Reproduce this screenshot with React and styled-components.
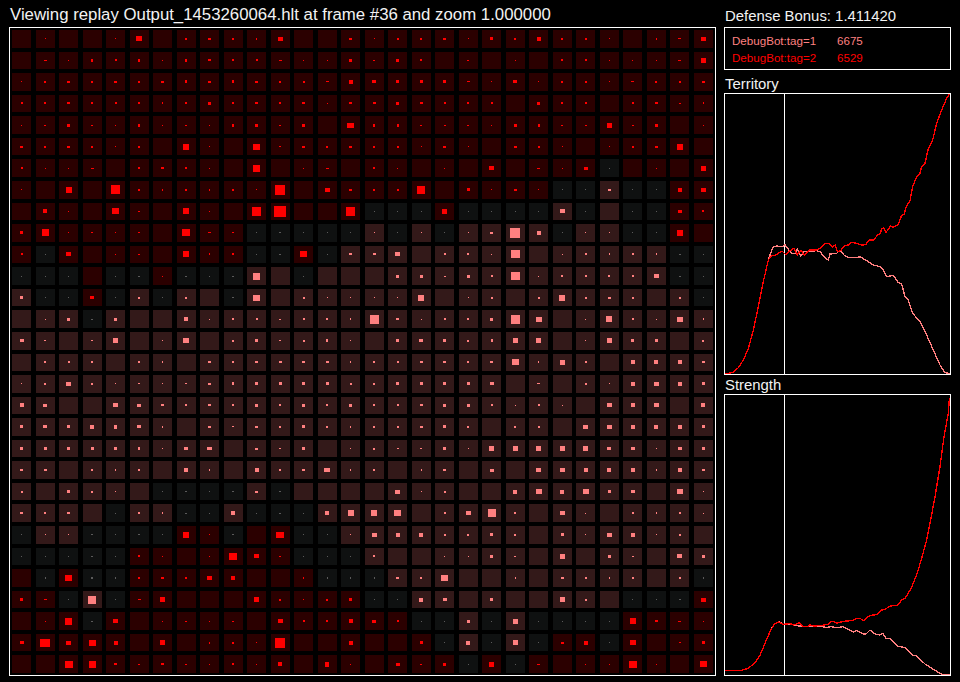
import React from 'react';
import styled, { createGlobalStyle } from 'styled-components';

const GlobalStyle = createGlobalStyle`
  html, body {
    margin: 0;
    background: #000;
  }
  body {
    font-family: "Liberation Sans", Arial, sans-serif;
    color: #fff;
  }
`;

// one row per map row, 3 blocks of 10 columns: r = red player, p = pink player, n = neutral
const OWNERS = [
  'rrrrrrrrrr' + 'rrrrrrrrrr' + 'rrrrrrrrrr',
  'rrrrrrrrrr' + 'rrrrrrrrrr' + 'rrrrrrrrrr',
  'rrrrrrrrrr' + 'rrrrrrrrrr' + 'rrrrrrrrrr',
  'rrrrrrrrrr' + 'rrrrrrrrrr' + 'rrrrrrrrrr',
  'rrrrrrrrrr' + 'rrrrrrrrrr' + 'rrrrrrrrrr',
  'rrrrrrrrrr' + 'rrrrrrrrrr' + 'rrrrrrrrrr',
  'rrrrrrrrrr' + 'rrrrrrrrrr' + 'rrrrrnrrrr',
  'rrrrrrrrrr' + 'rrrrrrrrrr' + 'rrrnnpnnrr',
  'rrrrrrrrrr' + 'rrrrrnnnrn' + 'nnnpnpnnrr',
  'rrrrrrrrrr' + 'nnnnnpnpnp' + 'pppnppnnrr',
  'rnrrrrrrrr' + 'nnrnpppppp' + 'ppppppppnn',
  'nnnrnnrnnn' + 'ppnppppppp' + 'ppppppppnn',
  'pnnrnpnppn' + 'pppppppppp' + 'pppppppppn',
  'pppnpppppp' + 'pppppppppp' + 'pppppppppp',
  'pppppppppp' + 'pppppppppp' + 'pppppppppp',
  'pppppppppp' + 'pppppppppp' + 'pppppppppp',
  'pppppppppp' + 'pppppppppp' + 'pppppppppp',
  'pppppppppp' + 'pppppppppp' + 'pppppppppp',
  'pppppppppp' + 'pppppppppp' + 'pppppppppp',
  'pppppppppp' + 'pppppppppp' + 'pppppppppp',
  'pppppppppp' + 'pppppppppp' + 'pppppppppp',
  'ppppppnnnn' + 'pnpppppppp' + 'pppppppppp',
  'ppppnppnnp' + 'nnnppppppp' + 'pppppppppp',
  'nppnnnnrrn' + 'rrnnpppppp' + 'pppppppppp',
  'nnnnnrrrrr' + 'rrnnnppppp' + 'pppppppppp',
  'rnrnnrrrrr' + 'rrrnnnpppp' + 'pppppppppn',
  'rrnpnrrrrr' + 'rrrrrnnppp' + 'ppppppnnnr',
  'rrrnrrrrrr' + 'rrrrrrrnnp' + 'npnnnnrrrr',
  'rrrrrrrrrr' + 'rrrrrrrrnp' + 'npnrrnrrrr',
  'rrrrrrrrrr' + 'rrrrrrrrrn' + 'rnrrrrrrrr',
];

// strength mark in each cell, see MARKS
const STRENGTH = [
  '01001M02=2' + 'JW00=122=1' + '3242210J_W',
  '0_1I2I1I=2' + '2_113-320-' + '01022111_5',
  '12=2=2=I=I' + '=22_4w333_' + '1w1221_22=',
  '22=222J232' + '=2=1==3=22' + '2032202=-J',
  '1-3-1I1-1I' + '3-30NII---' + '13I--5-301',
  '=2=2120610' + 'P-=2=221=1' + '0=21012=60',
  '211_02=210' + '701_021010' + 'W0_1w10105',
  '106092J2J2' + '1a0W=22803' + '1=111=114W',
  '0410P-0610' + '9c00911151' + '111W1011w2',
  '371-1-0Q_-' + '1-11111111' + '=a41111160',
  '21W01-06J2' + '1-P1==W022' + '1R012J2J-1',
  '11101-1-1-' + '70100033-3' + '2R12222W-1',
  '311w12120-' + 'P021111601' + '20262=2021',
  '013-300412' + '2-22J9=122' + '39M01621MJ',
  'w-0-501M02' + '3-2I103w32' + 'I550153302',
  '022202J0=2' + '====J22==2' + '=PJ520444=',
  '12W21-1-=I' + '3333223333' + 'w0_0214W43',
  '4w00Ww=2=2' + '3232322=33' + '21210W4W04',
  '3w34HwJ0=-' + '=232J22=32' + '0220WW4443',
  '33333I1wV0' + '=-3012--31' + '55555ww1w3',
  '==02J204J0' + '42=XJ20J=0' + 'w0WW444J4=',
  '2032101-1-' + '=-0000W120' + '04M4M3w0M1',
  '=2=012J-14' + '1-1466P02W' + '820W102J21',
  '111-1-161-' + '0U111W4422' + '32031W4120',
  '111-12101Q' + 'W-11120011' + '3-0503-0W3',
  '0JP2J2=2W4' + '00JJJJ=2P0' + '0J0=2J202J',
  '3_181_5000' + '52123114w0' + '30052011-W',
  '017-W01-1-' + '0W224w2113' + '1511116=_1',
  'wZWP4050J2' + '1a00400314' + '151=41M0-3',
  '00Q7=-=-12' + '140K10w-31' + '51_011Q10P',
];

// width and height in pixels for each mark
const MARKS = {
  1: [1, 1], 2: [2, 2], 3: [3, 3], 4: [4, 4], 5: [5, 5], 6: [6, 6], 7: [7, 7], 8: [8, 8], 9: [9, 9],
  a: [10, 10], c: [12, 11],
  '-': [2, 1], _: [3, 1], '=': [3, 2], J: [1, 2], I: [2, 3], H: [3, 4], K: [4, 5],
  w: [4, 3], W: [5, 4], V: [5, 3], M: [6, 5], X: [6, 4], U: [8, 6], N: [7, 5], P: [7, 6], Q: [8, 7], R: [9, 8], Z: [10, 8],
};

const CELL_COLORS = { r: '#2b0000', p: '#331919', n: '#0f1111' };
const MARK_COLORS = { r: '#ff0000', p: '#ff8080', n: '#5a5a5a' };

const Page = styled.div`
  display: flex;
  gap: 8px;
  width: 960px;
  height: 682px;
  padding-left: 9px;
  box-sizing: border-box;
  overflow: hidden;
  background: #000;
`;

const LeftColumn = styled.div`
  display: flex;
  flex-direction: column;
  width: 707px;
`;

const Title = styled.div`
  height: 27px;
  padding-left: 1px;
  font-size: 16.8px;
  line-height: 29px;
  color: #f2f2f2;
  white-space: nowrap;
`;

const Board = styled.div`
  display: grid;
  grid-template-columns: repeat(30, 1fr);
  grid-template-rows: repeat(30, 1fr);
  column-gap: 4.5px;
  row-gap: 4px;
  height: 649px;
  padding: 2px 2.25px;
  box-sizing: border-box;
  border: 1px solid #fff;
`;

const Cell = styled.div`
  display: flex;
  align-items: center;
  justify-content: center;
  background: ${(p) => CELL_COLORS[p.$owner]};
`;

const Mark = styled.div`
  width: ${(p) => p.$w}px;
  height: ${(p) => p.$h}px;
  background: ${(p) => MARK_COLORS[p.$owner]};
`;

const Sidebar = styled.div`
  display: flex;
  flex-direction: column;
  width: 227px;
`;

const Label = styled.div`
  height: ${(p) => p.$height}px;
  padding-left: 1px;
  font-size: 14.9px;
  line-height: ${(p) => p.$lineHeight}px;
  color: #f2f2f2;
  white-space: nowrap;
`;

const ScoreBox = styled.div`
  display: flex;
  flex-direction: column;
  justify-content: center;
  height: 43px;
  padding-left: 7px;
  box-sizing: border-box;
  border: 1px solid #fff;
`;

const ScoreRow = styled.div`
  display: flex;
  height: 17px;
  font-size: 11.6px;
  line-height: 17px;
  color: ${(p) => p.$color};
`;

const ScoreName = styled.span`
  width: 105px;
`;

const ChartFrame = styled.div`
  height: 282px;
  box-sizing: border-box;
  border: 1px solid #fff;
`;

const ChartSvg = styled.svg`
  display: block;
  width: 225px;
  height: 280px;
  shape-rendering: crispEdges;
`;

const TERRITORY_PINK =
  '15,851 38,848 55,833 70,810 85,775 100,720 115,650 130,575 145,510 158,472 170,468 190,470 195,464 205,478 215,490 225,490 232,478 243,498 250,485 265,484 290,482 300,485 315,503 325,510 330,492 350,490 360,480 372,495 385,502 410,503 420,500 440,512 460,525 480,530 490,540 500,560 520,556 535,578 545,582 555,620 565,630 578,670 600,695 620,735 640,780 660,825 675,848 690,851';
const TERRITORY_RED =
  '15,851 38,848 55,833 70,810 85,775 100,720 115,650 130,575 145,510 155,496 165,496 175,490 187,484 197,494 208,484 222,474 232,494 243,480 253,496 268,480 290,480 305,472 315,460 330,462 337,472 345,465 352,485 362,482 372,468 385,465 393,457 410,460 425,465 437,464 447,450 462,450 470,438 480,430 486,416 492,414 498,427 512,408 520,412 534,405 545,376 552,374 558,352 570,332 578,290 590,260 600,250 605,230 615,220 625,175 638,150 650,100 665,60 680,25 688,12';
const STRENGTH_PINK =
  '15,871 65,871 85,865 105,848 120,826 135,790 150,755 162,733 177,725 190,733 200,731 215,733 230,737 260,740 290,738 320,742 335,740 350,743 370,740 385,748 400,756 410,752 430,762 438,762 450,750 465,762 480,765 488,760 498,775 510,775 532,798 555,803 578,826 590,828 615,852 640,868 665,883 690,885';
const STRENGTH_RED =
  '15,871 65,871 85,865 105,848 120,826 135,790 150,755 162,733 177,726 190,733 210,731 222,735 237,728 250,740 265,740 270,734 280,738 300,737 325,733 332,724 340,724 350,730 370,724 395,722 410,715 420,715 430,722 450,706 470,704 485,690 495,688 510,678 533,676 545,660 555,655 572,628 590,585 605,535 620,480 632,420 645,350 660,260 672,170 685,100 688,55';

function Chart({ viewBox, pink, red }) {
  return (
    <ChartFrame>
      <ChartSvg viewBox={viewBox} preserveAspectRatio="none">
        <line x1="193.5" y1="0" x2="193.5" y2="900" stroke="#fff" strokeWidth="3" />
        <polyline points={pink} fill="none" stroke="#ff8080" strokeWidth="4" />
        <polyline points={red} fill="none" stroke="#ff0000" strokeWidth="4" />
      </ChartSvg>
    </ChartFrame>
  );
}

export default function App() {
  return (
    <Page>
      <GlobalStyle />
      <LeftColumn>
        <Title>Viewing replay Output_1453260064.hlt at frame #36 and zoom 1.000000</Title>
        <Board>
          {OWNERS.flatMap((row, y) =>
            row.split('').map((owner, x) => {
              const size = MARKS[STRENGTH[y][x]];
              return (
                <Cell key={`${x}-${y}`} $owner={owner}>
                  {size && <Mark $owner={owner} $w={size[0]} $h={size[1]} />}
                </Cell>
              );
            })
          )}
        </Board>
      </LeftColumn>
      <Sidebar>
        <Label $height={27} $lineHeight={33}>Defense Bonus: 1.411420</Label>
        <ScoreBox>
          <ScoreRow $color="#ff8080">
            <ScoreName>DebugBot:tag=1</ScoreName>
            <span>6675</span>
          </ScoreRow>
          <ScoreRow $color="#ff0000">
            <ScoreName>DebugBot:tag=2</ScoreName>
            <span>6529</span>
          </ScoreRow>
        </ScoreBox>
        <Label $height={23} $lineHeight={28}>Territory</Label>
        <Chart viewBox="15 12 675 840" pink={TERRITORY_PINK} red={TERRITORY_RED} />
        <Label $height={19} $lineHeight={20}>Strength</Label>
        <Chart viewBox="15 45 675 840" pink={STRENGTH_PINK} red={STRENGTH_RED} />
      </Sidebar>
    </Page>
  );
}
